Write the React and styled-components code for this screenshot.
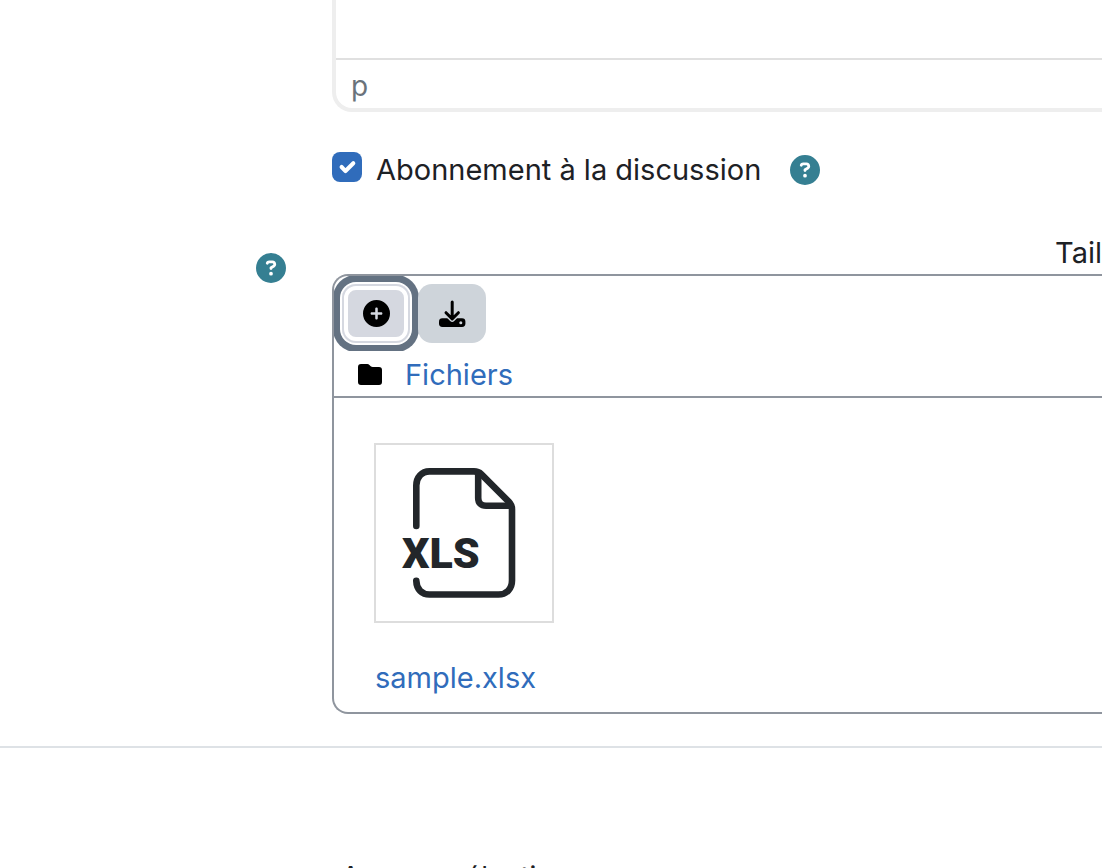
import React from "react";
import styled, { createGlobalStyle } from "styled-components";
import { FaCircleQuestion, FaCirclePlus } from "react-icons/fa6";

const GlobalStyle = createGlobalStyle`
  * {
    box-sizing: border-box;
  }
  body {
    margin: 0;
    background: #fff;
    color: #1d2125;
    font-family: Inter, "Liberation Sans", sans-serif;
    font-size: 29px;
    line-height: 46px;
  }
`;

const Page = styled.main`
  height: 100vh;
  overflow: hidden;
`;

const Row = styled.div`
  display: grid;
  grid-template-columns: 286px minmax(0, 1fr);
  column-gap: 46px;
  margin-top: ${(props) => props.$top || 0}px;
`;

const Side = styled.div`
  display: flex;
  justify-content: flex-end;
  align-items: flex-start;
  padding-top: 23px;
`;

const Content = styled.div`
  grid-column: 2;
`;

const Editor = styled.div`
  border: solid #eee;
  border-width: 0 0 4px 4px;
  border-bottom-left-radius: 20px;
`;

const EditorBody = styled.div`
  height: 58px;
`;

const StatusBar = styled.div`
  height: 50px;
  padding: 3px 15px;
  border-top: 2px solid #e0e0e0;
  color: #6a737b;
  font-size: 28px;
`;

const CheckRow = styled.div`
  display: flex;
  align-items: center;
`;

const Checkbox = styled.input`
  appearance: none;
  width: 30px;
  height: 30px;
  margin: 0 14px 6px 0;
  border-radius: 8px;
  background: #fff;
  border: 2px solid #8f959e;
  cursor: pointer;
  &:checked {
    border: 0;
    background: #306cbb
      url("data:image/svg+xml,%3Csvg xmlns='http://www.w3.org/2000/svg' viewBox='0 0 20 20'%3E%3Cpath fill='none' stroke='%23fff' stroke-linecap='round' stroke-linejoin='round' stroke-width='2.7' d='M6.4 10l2.6 2.7 5.2-5.2'/%3E%3C/svg%3E")
      center / 30px 30px no-repeat;
  }
`;

const HelpButton = styled.button`
  display: flex;
  padding: 0;
  border: 0;
  background: none;
  color: #357f92;
  font-size: 30px;
  cursor: pointer;
`;

const CheckLabel = styled.label`
  margin-right: 29px;
`;

const Restrictions = styled.div`
  height: 44px;
  text-align: right;
`;

const FileManager = styled.section`
  border: 2px solid #8f959e;
  border-right: 0;
  border-radius: 16px 0 0 16px;
`;

const Toolbar = styled.div`
  display: flex;
  gap: 8px;
  height: 75px;
  padding: 8px;
  overflow: hidden;
`;

const ToolButton = styled.button`
  display: flex;
  align-items: center;
  justify-content: center;
  width: 68px;
  height: 59px;
  padding: 0;
  border: 0;
  border-radius: 14px;
  background: ${(props) => (props.$active ? "#d5d8e0" : "#ced4da")};
  box-shadow: ${(props) =>
    props.$active
      ? "inset 0 0 0 2px #d5d8e0, inset 0 0 0 6px #fff, 0 0 0 2px #fff, 0 0 0 9px #647282"
      : "none"};
  color: #000;
  font-size: 27px;
  cursor: pointer;
`;

const PathBar = styled.nav`
  display: flex;
  align-items: center;
  gap: 23px;
  height: 47px;
  padding: 2px 24px 0;
  border-bottom: 2px solid #8f959e;
`;

const TextLink = styled.a`
  color: #306cbb;
  text-decoration: none;
`;

const Files = styled.div`
  height: 314px;
  padding: 45px 40px 0;
`;

const FileLink = styled(TextLink)`
  display: inline-flex;
  flex-direction: column;
  gap: 32px;
`;

const Thumb = styled.span`
  display: block;
  width: 180px;
  height: 180px;
  border: 2px solid #ddd;
  svg {
    display: block;
  }
`;

const FileName = styled.span`
  padding-left: 1px;
`;

const Divider = styled.hr`
  height: 2px;
  margin: 32px 0 0;
  border: 0;
  background: #dee2e6;
`;

const Empty = styled.p`
  margin: 0;
  padding-left: 9px;
  font-size: 28px;
`;

const DownloadIcon = () => (
  <svg width='28' height='28' viewBox='0 0 28 28' fill='none'>
    <rect x='1' y='18.3' width='26.4' height='8.7' rx='3.4' fill='#000' />
    <circle cx='22.8' cy='22.7' r='1.5' fill='#ced4da' />
    <path
      d='M8 12.700l6.200 6.200 6.200-6.200'
      stroke='#ced4da'
      strokeWidth='5.800'
      strokeLinejoin='round'
    />
    <path
      d='M14.200 2v16.500M8 12.700l6.200 6.200 6.200-6.200'
      stroke='#000'
      strokeWidth='3'
      strokeLinecap='round'
      strokeLinejoin='round'
    />
  </svg>
);

const FolderIcon = () => (
  <svg width='24' height='22' viewBox='0 0 24 22'>
    <path d='M3 0h6.2a3 3 0 0 1 2.2.9l1.3 1.3a3 3 0 0 0 2.1.8H21a3 3 0 0 1 3 3v12a3 3 0 0 1-3 3H3a3 3 0 0 1-3-3V3a3 3 0 0 1 3-3z' />
  </svg>
);

const XlsIcon = () => (
  <svg width='176' height='176' viewBox='376 445 176 176' fill='none'>
    <g
      stroke='#22262a'
      strokeWidth='6.6'
      strokeLinecap='round'
      strokeLinejoin='round'
    >
      <path d='M416.3 526V485.5c0-8 5.2-14.1 13.2-14.1H474c3 0 5.2.8 7.2 2.8l27.5 27.5c2.2 2.2 3.3 4.6 3.3 7.8v71c0 8.5-5.6 14-13.5 14h-69c-7.6 0-13-5.2-13.2-13.6' />
      <path d='M478.2 473v25c0 5 2.800 7.800 7.800 7.800h24' />
    </g>
    <text
      x='402'
      y='568'
      fill='#22262a'
      fontFamily='Roboto, sans-serif'
      fontSize='43'
      fontWeight='900'
    >
      XLS
    </text>
  </svg>
);

const Help = () => (
  <HelpButton type='button' aria-label='Aide'>
    <FaCircleQuestion />
  </HelpButton>
);

const App = () => {
  const [subscribed, setSubscribed] = React.useState(true);
  return (
    <Page>
      <GlobalStyle />
      <Row>
        <Content>
          <Editor>
            <EditorBody />
            <StatusBar>p</StatusBar>
          </Editor>
        </Content>
      </Row>
      <Row $top={35}>
        <Content>
          <CheckRow>
            <Checkbox
              id='subscribe'
              type='checkbox'
              checked={subscribed}
              onChange={(e) => setSubscribed(e.target.checked)}
            />
            <CheckLabel htmlFor='subscribe'>
              Abonnement à la discussion
            </CheckLabel>
            <Help />
          </CheckRow>
        </Content>
      </Row>
      <Row $top={37}>
        <Side>
          <Help />
        </Side>
        <Content>
          <Restrictions>Tail</Restrictions>
          <FileManager>
            <Toolbar>
              <ToolButton type='button' aria-label='Ajouter' $active>
                <FaCirclePlus />
              </ToolButton>
              <ToolButton type='button' aria-label='Tout télécharger'>
                <DownloadIcon />
              </ToolButton>
            </Toolbar>
            <PathBar>
              <FolderIcon />
              <TextLink href='#'>Fichiers</TextLink>
            </PathBar>
            <Files>
              <FileLink href='#'>
                <Thumb>
                  <XlsIcon />
                </Thumb>
                <FileName>sample.xlsx</FileName>
              </FileLink>
            </Files>
          </FileManager>
        </Content>
      </Row>
      <Divider />
      <Row $top={106}>
        <Content>
          <Empty>Aucune sélection</Empty>
        </Content>
      </Row>
    </Page>
  );
};

export default App;
